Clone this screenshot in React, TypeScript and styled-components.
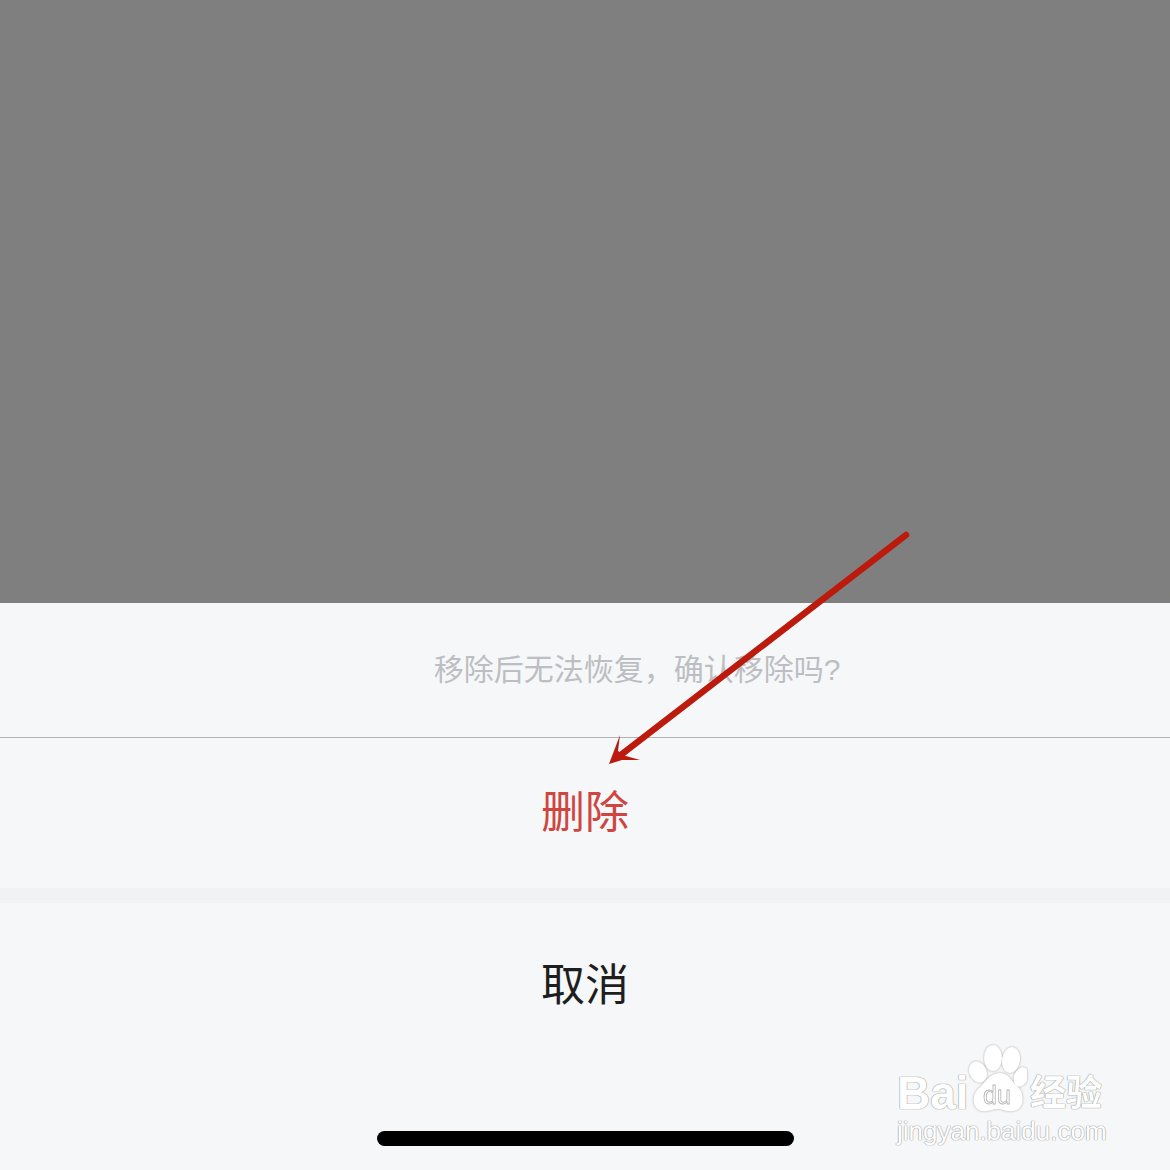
import styled, { createGlobalStyle } from "styled-components";

const GlobalStyle = createGlobalStyle`
  html, body {
    margin: 0;
    padding: 0;
    background: #f6f7f9;
  }
  * {
    box-sizing: border-box;
  }
`;

const Page = styled.div`
  position: relative;
  width: 1170px;
  height: 1170px;
  overflow: hidden;
  display: flex;
  flex-direction: column;
  background: #f6f7f9;
  font-family: "Noto Sans CJK SC", "Liberation Sans", sans-serif;
`;

const Backdrop = styled.div`
  height: 603px;
  background: #7f7f7f;
`;

const Sheet = styled.div`
  flex: 1;
  display: flex;
  flex-direction: column;
`;

const Message = styled.div`
  height: 135px;
  padding: 0 0 7px 104px;
  border-bottom: 1px solid #b2b2b2;
  display: flex;
  align-items: center;
  justify-content: center;
  font-family: "Liberation Sans", "Noto Sans CJK SC", sans-serif;
  font-size: 30px;
  color: #bcbec2;
`;

const Action = styled.div<{ $danger?: boolean }>`
  height: 150px;
  padding: ${(p) => (p.$danger ? "0 0 8px" : "7px 0 0")};
  display: flex;
  align-items: center;
  justify-content: center;
  font-size: 44px;
  color: ${(p) => (p.$danger ? "#cf4540" : "#1e1e1e")};
`;

const Gap = styled.div`
  height: 15px;
  background: #f1f2f4;
`;

const CancelArea = styled.div`
  flex: 1;
  display: flex;
  flex-direction: column;
  align-items: center;
  padding-bottom: 24px;
`;

const HomeBar = styled.div`
  width: 417px;
  height: 15px;
  margin-top: auto;
  border-radius: 8px;
  background: #000;
`;

const Arrow = styled.svg`
  position: absolute;
  left: 0;
  top: 0;
  pointer-events: none;
`;

const Watermark = styled.div`
  position: absolute;
  left: 897px;
  top: 1041px;
  width: 212px;
  color: #fff;
  font-family: "Liberation Sans", "Noto Sans CJK SC", sans-serif;
  text-shadow: 0 0 1px #a0a0a0, 0 0 1px #a0a0a0, 0 0 1px #a0a0a0;
`;

const LogoRow = styled.div`
  height: 73px;
  display: flex;
  align-items: flex-end;
`;

const LogoWord = styled.span`
  width: 72px;
  font-size: 46px;
  font-weight: 700;
  line-height: 46px;
  margin-bottom: -2px;
`;

const Paw = styled.svg`
  flex: none;
  filter: drop-shadow(0 0 1px #a8a8a8);
`;

const LogoCn = styled.span`
  margin-left: 3px;
  font-size: 36px;
  font-weight: 700;
  line-height: 42px;
  white-space: nowrap;
  margin-bottom: -1px;
`;

const Domain = styled.div`
  margin-top: 3px;
  font-size: 26px;
  line-height: 28px;
  white-space: nowrap;
`;

export default function App() {
  return (
    <Page>
      <GlobalStyle />
      <Backdrop />
      <Sheet>
        <Message>移除后无法恢复，确认移除吗?</Message>
        <Action $danger>删除</Action>
        <Gap />
        <CancelArea>
          <Action>取消</Action>
          <HomeBar />
        </CancelArea>
      </Sheet>

      <Arrow width="1170" height="1170" viewBox="0 0 1170 1170">
        <line x1="906" y1="535" x2="622" y2="754" stroke="#bb1a0c" strokeWidth="6.5" strokeLinecap="round" />
        <path d="M609 764 L620 735 L618 751 L626 756 L640 760 L622 760 Z" fill="#bb1a0c" />
      </Arrow>

      <Watermark>
        <LogoRow>
          <LogoWord>Bai</LogoWord>
          <Paw width="58" height="71" viewBox="0 0 58 71">
            <g fill="#fff">
              <ellipse cx="9" cy="29" rx="8.5" ry="11" transform="rotate(-25 9 29)" />
              <ellipse cx="24" cy="15" rx="9" ry="13" />
              <ellipse cx="42" cy="17" rx="9" ry="13" transform="rotate(8 42 17)" />
              <ellipse cx="52" cy="34" rx="7" ry="10" transform="rotate(20 52 34)" />
              <path d="M31 30 C40 30 43 39 49 44 C56 50 56 67 44 68 C36 69 33 66 29 66 C24 66 20 69 13 68 C3 66 2 53 9 46 C15 41 20 30 31 30 Z" />
            </g>
            <text x="28" y="61" textAnchor="middle" fontSize="25" fontFamily="Liberation Sans" fill="#fff" stroke="#b4b4b4" strokeWidth="0.8" style={{ textShadow: "none" }}>du</text>
          </Paw>
          <LogoCn>经验</LogoCn>
        </LogoRow>
        <Domain>jingyan.baidu.com</Domain>
      </Watermark>
    </Page>
  );
}
